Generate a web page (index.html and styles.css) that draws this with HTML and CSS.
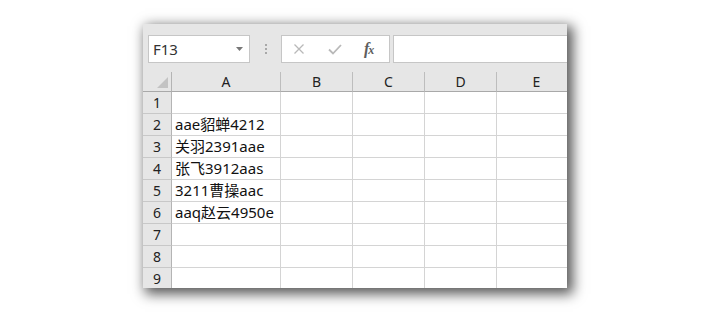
FILE: index.html
```html
<!DOCTYPE html>
<html>
<head>
<meta charset="utf-8">
<link rel="stylesheet" href="styles.css">
</head>
<body>
<div class="stage">
  <div class="window">
    <div class="toolbar">
      <div class="namebox">
        <span class="nb-text">F13</span>
        <svg class="nb-arrow" width="7" height="4" viewBox="0 0 7 4"><polygon points="0,0 7,0 3.5,4" fill="#777"/></svg>
      </div>
      <div class="grip"><i></i><i></i><i></i></div>
      <div class="fbtns">
        <svg class="ic" width="12" height="10" viewBox="0 0 12 10"><path d="M1.5 0.5 L10.5 9.5 M10.5 0.5 L1.5 9.5" stroke="#b9b9b9" stroke-width="1.3" fill="none"/></svg>
        <svg class="ic" width="14" height="11" viewBox="0 0 14 11"><path d="M1 5.5 L5 9.5 L13 1" stroke="#b9b9b9" stroke-width="1.8" fill="none"/></svg>
        <span class="fx">f<span class="x">x</span></span>
      </div>
      <div class="finput"></div>
    </div>
    <div class="sheet">
      <div class="hd corner"><svg width="28" height="19" viewBox="0 0 28 19"><polygon points="14,16 25,5 25,16" fill="#c3c3c3"/></svg></div>
      <div class="hd col">A</div>
      <div class="hd col">B</div>
      <div class="hd col">C</div>
      <div class="hd col">D</div>
      <div class="hd col">E</div>

      <div class="rh">1</div><div class="c"></div><div class="c"></div><div class="c"></div><div class="c"></div><div class="c"></div>
      <div class="rh">2</div><div class="c">aae貂蝉4212</div><div class="c"></div><div class="c"></div><div class="c"></div><div class="c"></div>
      <div class="rh">3</div><div class="c">关羽2391aae</div><div class="c"></div><div class="c"></div><div class="c"></div><div class="c"></div>
      <div class="rh">4</div><div class="c">张飞3912aas</div><div class="c"></div><div class="c"></div><div class="c"></div><div class="c"></div>
      <div class="rh">5</div><div class="c">3211曹操aac</div><div class="c"></div><div class="c"></div><div class="c"></div><div class="c"></div>
      <div class="rh">6</div><div class="c">aaq赵云4950e</div><div class="c"></div><div class="c"></div><div class="c"></div><div class="c"></div>
      <div class="rh">7</div><div class="c"></div><div class="c"></div><div class="c"></div><div class="c"></div><div class="c"></div>
      <div class="rh">8</div><div class="c"></div><div class="c"></div><div class="c"></div><div class="c"></div><div class="c"></div>
      <div class="rh">9</div><div class="c"></div><div class="c"></div><div class="c"></div><div class="c"></div><div class="c"></div>
    </div>
  </div>
</div>
</body>
</html>
```
FILE: styles.css
```css
html, body {
  margin: 0;
  padding: 0;
  background: #ffffff;
}
body {
  width: 710px;
  height: 324px;
  overflow: hidden;
  font-family: "Noto Sans", "Noto Sans CJK SC", sans-serif;
}
.stage {
  padding: 24px 0 0 143px;
}
.window {
  width: 424px;
  height: 264px;
  background: #e6e6e6;
  overflow: hidden;
  box-shadow: 4px 4px 12px 2px rgba(0, 0, 0, 0.66);
}
.toolbar {
  display: flex;
  align-items: center;
  height: 48px;
  box-sizing: border-box;
  padding: 11px 0 9px 5px;
}
.namebox {
  box-sizing: border-box;
  width: 102px;
  height: 28px;
  background: #fff;
  border: 1px solid #c6c6c6;
  display: flex;
  align-items: center;
  justify-content: space-between;
  padding: 0 6px 0 4px;
}
.nb-text {
  font-size: 15px;
  color: #333;
  line-height: 26px;
}
.nb-arrow {
  margin-top: -1px;
}
.grip {
  width: 31px;
  display: flex;
  flex-direction: column;
  align-items: center;
  gap: 2px;
}
.grip i {
  display: block;
  width: 2px;
  height: 2px;
  background: #a8a8a8;
}
.fbtns {
  box-sizing: border-box;
  width: 109px;
  height: 28px;
  background: #fff;
  border: 1px solid #c6c6c6;
  display: flex;
  align-items: center;
  padding-left: 11px;
}
.fbtns .ic:nth-child(1) {
  margin-right: 23px;
}
.fbtns .ic:nth-child(2) {
  margin-right: 22px;
}
.fx {
  font-family: "Liberation Serif", serif;
  font-style: italic;
  font-weight: bold;
  font-size: 16px;
  color: #5e5e5e;
  line-height: 20px;
  letter-spacing: -1px;
}
.fx .x {
  font-size: 12px;
}
.finput {
  flex: 1;
  height: 28px;
  box-sizing: border-box;
  margin-left: 3px;
  background: #fff;
  border: 1px solid #c6c6c6;
  border-right: none;
}
.sheet {
  display: grid;
  grid-template-columns: 29px 109px 72px 72px 72px 80px;
  grid-template-rows: 20px repeat(9, 22px);
}
.hd {
  box-sizing: border-box;
  background: #e6e6e6;
  border-bottom: 1px solid #a9a9a9;
  border-right: 1px solid #bdbdbd;
  font-size: 14px;
  line-height: 19px;
  text-align: center;
  color: #222;
}
.corner {
  border-right: 1px solid #b4b4b4;
}
.corner svg {
  display: block;
}
.rh {
  box-sizing: border-box;
  background: #e6e6e6;
  border-right: 1px solid #b4b4b4;
  border-bottom: 1px solid #c8c8c8;
  font-size: 14px;
  line-height: 21px;
  text-align: center;
  color: #222;
}
.c {
  box-sizing: border-box;
  background: #fff;
  border-right: 1px solid #d4d4d4;
  border-bottom: 1px solid #d4d4d4;
  font-size: 15px;
  line-height: 21px;
  padding-left: 3px;
  color: #111;
  white-space: nowrap;
}
```
